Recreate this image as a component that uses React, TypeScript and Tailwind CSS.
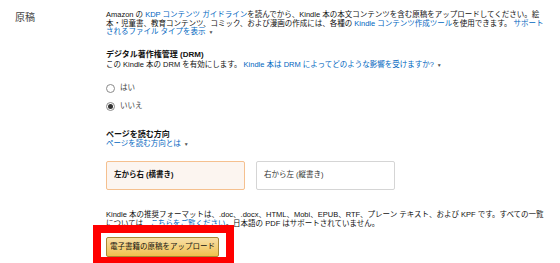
const font = { fontFamily: '"Liberation Sans", "Noto Sans CJK JP", sans-serif' };

function Caret() {
  return <span className="ml-[3px] inline-block align-middle text-[5px] text-[#555]">▼</span>;
}

function Radio({ checked, label }: { checked?: boolean; label: string }) {
  return (
    <div className="flex items-center gap-[5px]">
      <span className="flex h-[9px] w-[9px] items-center justify-center rounded-full border border-[#8a8a8a] bg-white">
        {checked && <span className="h-[5px] w-[5px] rounded-full bg-[#333]" />}
      </span>
      <span>{label}</span>
    </div>
  );
}

export default function App() {
  return (
    <div className="relative h-[263px] w-[560px] overflow-hidden bg-white text-[#111]" style={font}>
      <div className="flex">
        <div className="w-[106px] shrink-0 pl-[15px] pt-[10px] text-[10px] text-[#444]">原稿</div>

        <div className="whitespace-nowrap pt-[11px] text-[7.5px] leading-[8.7px]">
          <p>
            Amazon の <span className="text-[#0066c0]">KDP コンテンツ ガイドライン</span>を読んでから、Kindle 本の本文コンテンツを含む原稿をアップロードしてください。絵
            <br />
            本・児童書、教育コンテンツ、コミック、および漫画の作成には、各種の <span className="text-[#0066c0]">Kindle コンテンツ作成ツール</span>を使用できます。 <span className="text-[#0066c0]">サポート</span>
            <br />
            <span className="text-[#0066c0]">されるファイル タイプを表示</span>
            <Caret />
          </p>

          <h3 className="mt-[14px] text-[8px] font-bold">デジタル著作権管理 (DRM)</h3>
          <p className="mt-[1px]">
            この Kindle 本の DRM を有効にします。 <span className="text-[#0066c0]">Kindle 本は DRM によってどのような影響を受けますか?</span>
            <Caret />
          </p>

          <div className="mt-[14px] flex flex-col gap-[9px] text-[#444]">
            <Radio label="はい" />
            <Radio checked label="いいえ" />
          </div>

          <h3 className="mt-[20px] text-[8px] font-bold">ページを読む方向</h3>
          <p className="text-[#0066c0]">
            ページを読む方向とは
            <Caret />
          </p>

          <div className="mt-[12px] flex gap-[11px]">
            <div className="flex h-[29px] w-[139px] items-center rounded-[2px] border border-[#f5c08f] bg-[#fcf5f0] px-[7px] font-bold">
              左から右 (横書き)
            </div>
            <div className="flex h-[29px] w-[139px] items-center rounded-[2px] border border-[#d5d5d5] bg-white px-[7px] text-[#333]">
              右から左 (縦書き)
            </div>
          </div>

          <p className="mt-[21px]">
            Kindle 本の推奨フォーマットは、.doc、.docx、HTML、Mobi、EPUB、RTF、プレーン テキスト、および KPF です。すべての一覧
            <br />
            については、<span className="text-[#0066c0]">こちらをご覧ください</span>。日本語の PDF はサポートされていません。
          </p>

          <button className="mt-[9px] flex h-[20px] w-[113px] items-center justify-center rounded-[2px] border border-[#a88734] bg-gradient-to-b from-[#f7dfa5] to-[#f0c14b] text-[7.5px] text-[#111]">
            電子書籍の原稿をアップロード
          </button>
        </div>
      </div>

      <div className="absolute left-[93px] top-[225px] h-[40px] w-[141px] border-[8px] border-[#f00]" />
    </div>
  );
}
